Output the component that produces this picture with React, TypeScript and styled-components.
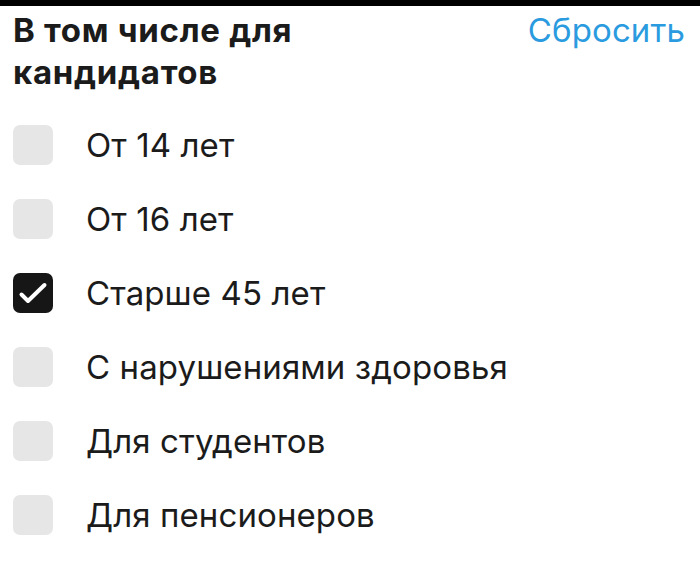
import React, { useState } from 'react';
import styled, { createGlobalStyle } from 'styled-components';

const GlobalStyle = createGlobalStyle`
    html, body {
        margin: 0;
        padding: 0;
        background: #ffffff;
    }
    body {
        font-family: Inter, "Noto Sans", sans-serif;
        color: #1b1b1b;
    }
`;

const options = [
    'От 14 лет',
    'От 16 лет',
    'Старше 45 лет',
    'С нарушениями здоровья',
    'Для студентов',
    'Для пенсионеров',
];

const App = () => {
    const [checked, setChecked] = useState<boolean[]>([false, false, true, false, false, false]);

    const toggle = (i: number) => {
        setChecked(prev => prev.map((v, idx) => (idx === i ? !v : v)));
    };

    return (
        <>
            <GlobalStyle />
            <TopBar />
            <Wrapper>
                <Header>
                    <Title>В том числе для кандидатов</Title>
                    <Reset onClick={() => setChecked(options.map(() => false))}>Сбросить</Reset>
                </Header>
                <List>
                    {options.map((label, i) => (
                        <Row key={label} onClick={() => toggle(i)}>
                            <Box $checked={checked[i]}>
                                {checked[i] && (
                                    <svg width="40" height="40" viewBox="0 0 40 40" fill="none">
                                        <path
                                            d="M8.5 21.5l6.5 6.5L31.5 12"
                                            stroke="#ffffff"
                                            strokeWidth="4"
                                            strokeLinecap="round"
                                            strokeLinejoin="round"
                                        />
                                    </svg>
                                )}
                            </Box>
                            <Label>{label}</Label>
                        </Row>
                    ))}
                </List>
            </Wrapper>
        </>
    );
};

export default App;

const TopBar = styled.div`
    height: 6px;
    background: #000000;
`;

const Wrapper = styled.div`
    padding: 3px 15px 0 13px;
`;

const Header = styled.div`
    display: flex;
    justify-content: space-between;
    align-items: flex-start;
`;

const Title = styled.h2`
    margin: 0;
    width: 320px;
    font-size: 33px;
    line-height: 42px;
    font-weight: 700;
    letter-spacing: 0.7px;
`;

const Reset = styled.button`
    border: none;
    background: none;
    padding: 0;
    font-family: inherit;
    font-size: 33px;
    line-height: 42px;
    letter-spacing: 0.1px;
    color: #2b9be0;
    cursor: pointer;
`;

const List = styled.div`
    display: flex;
    flex-direction: column;
    gap: 34px;
    margin-top: 32px;
`;

const Row = styled.label`
    display: flex;
    align-items: center;
    gap: 33px;
    cursor: pointer;
`;

const Box = styled.span<{ $checked: boolean }>`
    width: 40px;
    height: 40px;
    flex-shrink: 0;
    border-radius: 7px;
    background: ${p => (p.$checked ? '#161616' : '#e6e6e6')};
    display: flex;
    align-items: center;
    justify-content: center;
`;

const Label = styled.span`
    font-size: 33px;
    line-height: 40px;
    letter-spacing: 0.1px;
`;
